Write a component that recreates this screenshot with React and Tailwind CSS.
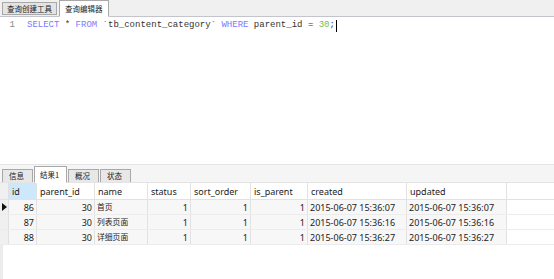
import React from "react";

const cols = [
  { key: "id", label: "id", w: 28, align: "right" },
  { key: "parent_id", label: "parent_id", w: 58, align: "right" },
  { key: "name", label: "name", w: 53, align: "left", cjk: true },
  { key: "status", label: "status", w: 43, align: "right" },
  { key: "sort_order", label: "sort_order", w: 60, align: "right" },
  { key: "is_parent", label: "is_parent", w: 57, align: "right" },
  { key: "created", label: "created", w: 99, align: "left" },
  { key: "updated", label: "updated", w: 100, align: "left" },
];

const rows = [
  { id: "86", parent_id: "30", name: "首页", status: "1", sort_order: "1", is_parent: "1", created: "2015-06-07 15:36:07", updated: "2015-06-07 15:36:07" },
  { id: "87", parent_id: "30", name: "列表页面", status: "1", sort_order: "1", is_parent: "1", created: "2015-06-07 15:36:16", updated: "2015-06-07 15:36:16" },
  { id: "88", parent_id: "30", name: "详细页面", status: "1", sort_order: "1", is_parent: "1", created: "2015-06-07 15:36:27", updated: "2015-06-07 15:36:27" },
];

const sans = { fontFamily: '"Noto Sans", "Noto Sans CJK SC", sans-serif' };
const cjk = { fontFamily: '"Noto Sans CJK SC", sans-serif' };
const mono = { fontFamily: '"Liberation Mono", monospace' };

export default function App() {
  return (
    <div className="w-[554px] h-[279px] bg-white flex flex-col overflow-hidden text-[#222]" style={sans}>
      {/* top tabs */}
      <div className="h-[17px] shrink-0 bg-[#f0f0f0] border-b border-[#c4c4cc] flex items-end pl-[2px] gap-[2px]">
        <div className="h-[13px] mb-[1px] px-[4px] bg-[#e4e4e4] border border-[#a8a8a8] flex items-center text-[7.5px] leading-none" style={cjk}>
          查询创建工具
        </div>
        <div className="h-[17px] -mb-[1px] px-[5px] bg-white border border-[#a8a8a8] border-b-white flex items-center text-[7.5px] leading-none" style={cjk}>
          查询编辑器
        </div>
      </div>

      {/* editor */}
      <div className="h-[147px] shrink-0 bg-white flex items-start pt-[2px]">
        <div className="w-[27px] text-right pr-[12px] text-[9px] leading-[13px] text-[#888]" style={mono}>
          1
        </div>
        <div className="h-[13px] text-[9px] leading-[13px] whitespace-pre flex items-center" style={mono}>
          <span className="text-[#7a7aff]">SELECT</span>
          <span className="text-[#333]"> * </span>
          <span className="text-[#7a7aff]">FROM</span>
          <span className="text-[#333]"> `tb_content_category` </span>
          <span className="text-[#7a7aff]">WHERE</span>
          <span className="text-[#333]"> parent_id = </span>
          <span className="text-[#6cbf5a]">30</span>
          <span className="text-[#333]">;</span>
          <span className="w-[1px] h-[12px] bg-black ml-[1px]" />
        </div>
      </div>

      {/* bottom tabs */}
      <div className="h-[19px] shrink-0 bg-[#f5f5f5] border-t border-[#e4e4e4] border-b border-[#bdbdbd] flex items-end pl-[2px] gap-[1px]">
        {["信息", "结果1", "概况", "状态"].map((t, i) =>
          i === 1 ? (
            <div key={t} className="w-[33px] h-[17px] -mb-[1px] bg-white border border-[#a8a8a8] border-b-white flex items-center pl-[5px] text-[7.5px] leading-none" style={cjk}>
              {t}
            </div>
          ) : (
            <div key={t} className="w-[31px] h-[13px] bg-[#e8e8e8] border border-[#a8a8a8] border-b-0 flex items-center pl-[6px] text-[7.5px] leading-none" style={cjk}>
              {t}
            </div>
          )
        )}
      </div>

      {/* grid */}
      <div className="flex-1 flex flex-col bg-white">
        <div className="flex h-[17px] border-b border-[#e2e2e2]">
          <div className="w-[9px] bg-[#f0f0f0] border-r border-[#e0e0e0]" />
          {cols.map((c, i) => (
            <div
              key={c.key}
              className={`shrink-0 border-r border-[#e2e2e2] flex items-center pl-[3px] text-[9px] leading-none ${i === 0 ? "bg-[#cde8fb]" : "bg-white"}`}
              style={{ width: c.w }}
            >
              {c.label}
            </div>
          ))}
        </div>
        {rows.map((r, ri) => (
          <div key={ri} className="flex h-[15px] border-b border-[#ececec]">
            <div className="w-[9px] bg-[#f0f0f0] border-r border-[#e0e0e0] flex items-center justify-center">
              {ri === 0 && (
                <svg width="5" height="8" viewBox="0 0 5 8">
                  <path d="M0 0 L5 4 L0 8 Z" fill="#111" />
                </svg>
              )}
            </div>
            {cols.map((c) => (
              <div
                key={c.key}
                className={`shrink-0 border-r border-[#e2e2e2] flex items-center text-[9px] leading-none bg-[#f7f7f7] ${c.align === "right" ? "justify-end pr-[2px]" : "pl-[2px]"}`}
                style={{ width: c.w }}
              >
                {c.cjk ? (
                  <span className="text-[7.8px]" style={cjk}>{r[c.key]}</span>
                ) : (
                  r[c.key]
                )}
              </div>
            ))}
          </div>
        ))}
        <div className="flex-1 flex">
          <div className="w-[3px] bg-[#ececec]" />
        </div>
      </div>
    </div>
  );
}
